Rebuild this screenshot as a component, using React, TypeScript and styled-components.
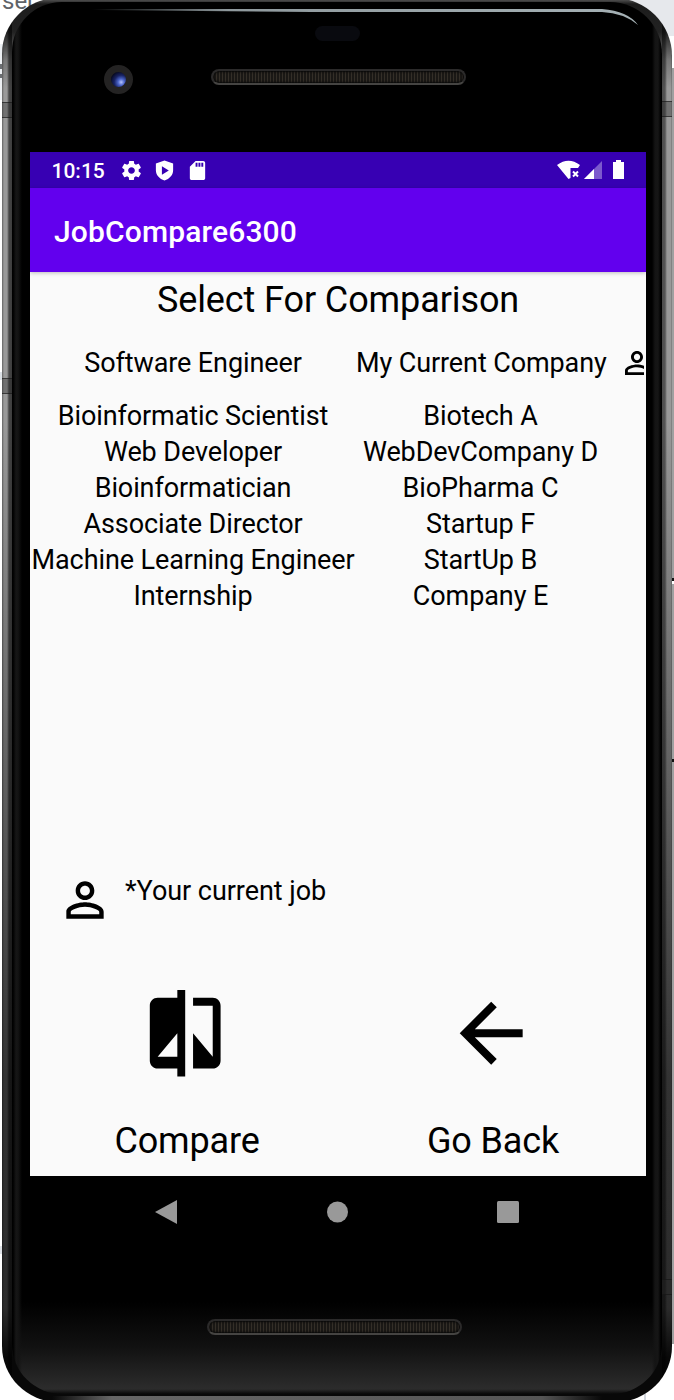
import React from 'react';
import styled, { createGlobalStyle } from 'styled-components';

const GlobalStyle = createGlobalStyle`
  * { box-sizing: border-box; }
  html, body { margin: 0; padding: 0; background: #fff; }
  body { font-family: Roboto, "Liberation Sans", sans-serif; color: #000; }
  svg { display: block; flex: none; }
`;

const Desktop = styled.div`
  position: relative;
  width: 674px;
  height: 1400px;
  overflow: hidden;
  background: #fff;
`;

const BackgroundText = styled.span`
  position: absolute;
  left: 2px;
  top: -11px;
  font-size: 24px;
  line-height: 24px;
  color: #5f6368;
`;

const BackgroundBlock = styled.div<{ $x: number; $y: number; $w: number; $h: number; $color: string }>`
  position: absolute;
  left: ${(p) => p.$x}px;
  top: ${(p) => p.$y}px;
  width: ${(p) => p.$w}px;
  height: ${(p) => p.$h}px;
  background: ${(p) => p.$color};
`;

const Phone = styled.div`
  position: relative;
  width: 670px;
  height: 1404px;
  margin: -2px 0 0 2px;
  padding: 4px 10px 8px;
  border-radius: 56px 58px 56px 56px;
  overflow: hidden;
  background:
    linear-gradient(90deg, transparent 0, #666 60px, #555 490px, transparent 550px) no-repeat 50px 1398px / 560px 6px,
    linear-gradient(90deg, rgba(0,0,0,.35) 0, rgba(0,0,0,0) 2px, rgba(0,0,0,0) 5px, rgba(0,0,0,.55) 7px, rgba(0,0,0,.6) 10px, transparent 10px, transparent 660px, rgba(0,0,0,.5) 660px, rgba(0,0,0,.45) 663px, rgba(0,0,0,0) 665px, rgba(0,0,0,0) 669px, rgba(0,0,0,.3) 670px),
    linear-gradient(180deg, #666 0, #1c1c1c 6px, #222 34px, #777 62px, #999 90px, #999 420px, #777 640px, #555 850px, #333 1080px, #2b2b2b 1310px, #080808 1360px, #080808 1404px);
`;

const AntennaBand = styled.i<{ $side: 'left' | 'right'; $y: number }>`
  position: absolute;
  ${(p) => p.$side}: 0;
  top: ${(p) => p.$y}px;
  width: 10px;
  height: 16px;
  background: rgba(40, 40, 40, 0.35);
  border: solid rgba(20, 20, 20, 0.6);
  border-width: 1px 0;
`;

const Glass = styled.div`
  position: relative;
  height: 100%;
  padding: 150px 16px 0 18px;
  border-radius: 50px 52px 50px 50px;
  overflow: hidden;
  background:
    linear-gradient(90deg, #000 1px, #161616 4px, #141414 6px, transparent 10px, transparent 640px, #141414 643px, #161616 646px, #000 649px),
    linear-gradient(180deg, #000 0, #000 1300px, #111 1345px, #2c2c2c 1387px, #080808 1392px);
`;

const GlassShine = styled.svg`
  position: absolute;
  left: 0;
  top: 0;
`;

const Camera = styled.div`
  position: absolute;
  left: 92px;
  top: 63px;
  width: 29px;
  height: 29px;
  border: 7px solid #242323;
  border-radius: 50%;
  background: radial-gradient(circle at 68% 68%, #b6c4ff 0, #4b65c9 22%, #182364 48%, #080b24 75%);
`;

const Sensor = styled.div`
  position: absolute;
  left: 303px;
  top: 24px;
  width: 45px;
  height: 15px;
  border-radius: 8px;
  background: #090a0f;
`;

const Speaker = styled.div<{ $x: number; $y: number }>`
  position: absolute;
  left: ${(p) => p.$x}px;
  top: ${(p) => p.$y}px;
  width: 255px;
  height: 16px;
  border: 2px solid #2b2a2a;
  border-bottom-color: #454442;
  border-radius: 8px;
  background: repeating-linear-gradient(90deg, #342f28 0 1px, #1a1815 1px 3px);
  box-shadow: inset 0 0 2px 1px #080808;
`;

const Screen = styled.div`
  width: 616px;
  height: 1024px;
  display: flex;
  flex-direction: column;
  overflow: hidden;
  background: #fafafa;
`;

const StatusBar = styled.div`
  height: 36px;
  flex: none;
  display: flex;
  align-items: center;
  padding: 0 20px 0 21.5px;
  background: #3700b3;
  color: #fff;
`;

const Clock = styled.span`
  width: 68.5px;
  padding-top: 2px;
  font-size: 21px;
  font-weight: 500;
  line-height: 24px;
`;

const StatusIcons = styled.div`
  display: flex;
  align-items: center;
  gap: 10px;
`;

const SystemIcons = styled.div`
  display: flex;
  align-items: center;
  margin-left: auto;
`;

const AppBar = styled.header`
  position: relative;
  z-index: 1;
  height: 84px;
  flex: none;
  display: flex;
  align-items: center;
  padding: 2px 24px 0;
  background: #6200ee;
  color: #fff;
  font-size: 30px;
  font-weight: 500;
  letter-spacing: 0.15px;
  box-shadow: 0 1px 4px rgba(0, 0, 0, 0.25);
`;

const Heading = styled.h1`
  margin: 0;
  height: 56px;
  font-size: 36px;
  font-weight: 400;
  line-height: 56px;
  letter-spacing: -0.1px;
  text-align: center;
`;

const JobList = styled.div`
  width: 614px;
  height: 540px;
  flex: none;
  overflow: hidden;
`;

const JobRow = styled.div<{ $current?: boolean }>`
  display: grid;
  grid-template-columns: 326px 249px 36px;
  align-items: center;
  height: ${(p) => (p.$current ? 70 : 36)}px;
  font-size: 27px;
  line-height: 36px;
  letter-spacing: -0.1px;
  white-space: nowrap;
  text-align: center;

  svg { margin-left: 14px; }
`;

const Legend = styled.div`
  display: flex;
  height: 56px;
  margin: 5px 0 0 27px;
  font-size: 27px;
  line-height: 36px;
  letter-spacing: -0.05px;
  gap: 12px;

  svg { margin-top: -1px; }
`;

const Actions = styled.div`
  display: flex;
  margin-top: 57px;
  padding-left: 4px;
`;

const ActionButton = styled.button`
  width: 306.5px;
  display: flex;
  flex-direction: column;
  align-items: center;
  padding: 0;
  border: 0;
  background: none;
  color: #000;
  font: 400 36px/48px Roboto, "Liberation Sans", sans-serif;
  letter-spacing: -0.15px;

  svg { margin: 0 4px 37px 0; }
`;

const NavBar = styled.nav`
  height: 72px;
  display: flex;
  align-items: center;
  justify-content: space-between;
  padding: 0 127px 0 125px;
`;

const Icon = ({ d, size }: { d: string; size: number }) => (
  <svg width={size} height={size} viewBox="0 0 24 24" fill="currentColor" fillRule="evenodd">
    <path d={d} />
  </svg>
);

const PERSON =
  'M12 5.9c1.16 0 2.1.94 2.1 2.1s-.94 2.1-2.1 2.1S9.9 9.16 9.9 8s.94-2.1 2.1-2.1m0 9c2.97 0 6.1 1.46 6.1 2.1v1.1H5.9V17c0-.64 3.13-2.1 6.1-2.1M12 4C9.79 4 8 5.79 8 8s1.79 4 4 4 4-1.79 4-4-1.79-4-4-4zm0 9c-2.67 0-8 1.34-8 4v3h16v-3c0-2.66-5.33-4-8-4z';
const COMPARE =
  'M10 3H5c-1.1 0-2 .9-2 2v14c0 1.1.9 2 2 2h5v2h2V1h-2v2zm0 15H5l5-6v6zM19 3h-5v2h5v13l-5-6v9h5c1.1 0 2-.9 2-2V5c0-1.1-.9-2-2-2z';
const ARROW = 'M20 11H7.83l5.59-5.59L12 4l-8 8 8 8 1.41-1.41L7.83 13H20v-2z';
const GEAR =
  'M19.43 12.98c.04-.32.07-.64.07-.98s-.03-.66-.07-.98l2.11-1.65c.19-.15.24-.42.12-.64l-2-3.46c-.12-.22-.39-.3-.61-.22l-2.49 1c-.52-.4-1.08-.73-1.69-.98l-.38-2.65C14.46 2.18 14.25 2 14 2h-4c-.25 0-.46.18-.49.42l-.38 2.65c-.61.25-1.17.59-1.69.98l-2.49-1c-.23-.09-.49 0-.61.22l-2 3.46c-.13.22-.07.49.12.64l2.11 1.65c-.04.32-.07.65-.07.98s.03.66.07.98l-2.11 1.65c-.19.15-.24.42-.12.64l2 3.46c.12.22.39.3.61.22l2.49-1c.52.4 1.08.73 1.69.98l.38 2.65c.03.24.24.42.49.42h4c.25 0 .46-.18.49-.42l.38-2.65c.61-.25 1.17-.59 1.69-.98l2.49 1c.23.09.49 0 .61-.22l2-3.46c.12-.22.07-.49-.12-.64l-2.11-1.65zM12 15.5c-1.93 0-3.5-1.57-3.5-3.5s1.57-3.5 3.5-3.5 3.5 1.57 3.5 3.5-1.57 3.5-3.5 3.5z';
const SHIELD_PLAY = 'M12 1.5L3 4.8v7c0 5 3.8 9 9 10.7 5.2-1.7 9-5.7 9-10.7v-7zM9.3 7.5v9l7.2-4.5z';
const SD_CARD =
  'M18 2h-8L4 8v12c0 1.1.9 2 2 2h12c1.1 0 2-.9 2-2V4c0-1.1-.9-2-2-2zM10 4h2v4h-2zm3 0h2v4h-2zm3 0h2v4h-2z';

const jobs: [string, string][] = [
  ['Bioinformatic Scientist', 'Biotech A'],
  ['Web Developer', 'WebDevCompany D'],
  ['Bioinformatician', 'BioPharma C'],
  ['Associate Director', 'Startup F'],
  ['Machine Learning Engineer', 'StartUp B'],
  ['Internship', 'Company E'],
];

export default function App() {
  return (
    <>
      <GlobalStyle />
      <Desktop>
        <BackgroundText>ser</BackgroundText>
        <BackgroundBlock $x={620} $y={0} $w={54} $h={36} $color="#e6e8ec" />
        <BackgroundBlock $x={0} $y={44} $w={8} $h={56} $color="#eceff2" />
        <BackgroundBlock $x={0} $y={64} $w={2} $h={5} $color="#6b6e72" />
        <BackgroundBlock $x={0} $y={74} $w={2} $h={4} $color="#6b6e72" />
        <BackgroundBlock $x={0} $y={372} $w={3} $h={8} $color="#dce1e6" />
        <BackgroundBlock $x={0} $y={1246} $w={3} $h={8} $color="#dfe2e7" />
        <BackgroundBlock $x={672} $y={68} $w={2} $h={1276} $color="#a0a0a0" />
        <BackgroundBlock $x={672} $y={578} $w={2} $h={3} $color="#111" />
        <BackgroundBlock $x={672} $y={581} $w={2} $h={3} $color="#fff" />
        <BackgroundBlock $x={672} $y={759} $w={2} $h={3} $color="#111" />
        <BackgroundBlock $x={644} $y={1380} $w={2} $h={20} $color="#d4d7dd" />
        <Phone>
          <AntennaBand $side="left" $y={104} />
          <AntennaBand $side="right" $y={103} />
          <AntennaBand $side="left" $y={380} />
          <AntennaBand $side="right" $y={1281} />
          <Glass>
            <GlassShine width="650" height="40" viewBox="0 0 650 40">
              <defs>
                <linearGradient id="shine" x1="0" x2="1">
                  <stop offset="0" stopColor="#9aa5a9" stopOpacity="0" />
                  <stop offset=".25" stopColor="#8f999d" />
                  <stop offset="1" stopColor="#a5b1b5" />
                </linearGradient>
              </defs>
              <path d="M80 7H590Q616 9 626 23Q612 11 590 10H300L80 8Z" fill="url(#shine)" />
            </GlassShine>
            <Sensor />
            <Camera />
            <Speaker $x={199} $y={67} />
            <Speaker $x={195} $y={1317} />
            <Screen>
              <StatusBar>
                <Clock>10:15</Clock>
                <StatusIcons>
                  <Icon d={GEAR} size={23} />
                  <Icon d={SHIELD_PLAY} size={23} />
                  <Icon d={SD_CARD} size={23} />
                </StatusIcons>
                <SystemIcons>
                  <svg width="69" height="24" viewBox="0 0 69 24" fill="#fff">
                    <path d="M0 7Q11.5-1.5 23 7L21 10H13.5V20L11.5 21Z" />
                    <path d="M16 13.5L21 18.5M21 13.5L16 18.5" stroke="#fff" strokeWidth="2" />
                    <path d="M27 21L45 3V21Z" opacity=".35" />
                    <path d="M27 21L37 11V21Z" />
                    <path d="M56 4H59V2H64V4H67V21H56Z" />
                  </svg>
                </SystemIcons>
              </StatusBar>
              <AppBar>JobCompare6300</AppBar>
              <Heading>Select For Comparison</Heading>
              <JobList>
                <JobRow $current>
                  <span>Software Engineer</span>
                  <span>My Current Company</span>
                  <Icon d={PERSON} size={36} />
                </JobRow>
                {jobs.map(([title, company]) => (
                  <JobRow key={title}>
                    <span>{title}</span>
                    <span>{company}</span>
                  </JobRow>
                ))}
              </JobList>
              <Legend>
                <Icon d={PERSON} size={56} />
                <span>*Your current job</span>
              </Legend>
              <Actions>
                <ActionButton>
                  <Icon d={COMPARE} size={94.4} />
                  Compare
                </ActionButton>
                <ActionButton>
                  <Icon d={ARROW} size={94.4} />
                  Go Back
                </ActionButton>
              </Actions>
            </Screen>
            <NavBar>
              <svg width="22" height="24" viewBox="0 0 22 24"><path d="M0 12L22 0V24Z" fill="#999" /></svg>
              <svg width="22" height="22" viewBox="0 0 22 22"><circle cx="11.5" cy="11" r="10.5" fill="#999" /></svg>
              <svg width="22" height="22" viewBox="0 0 22 22"><rect width="22" height="22" rx="1.5" fill="#999" /></svg>
            </NavBar>
          </Glass>
        </Phone>
      </Desktop>
    </>
  );
}
